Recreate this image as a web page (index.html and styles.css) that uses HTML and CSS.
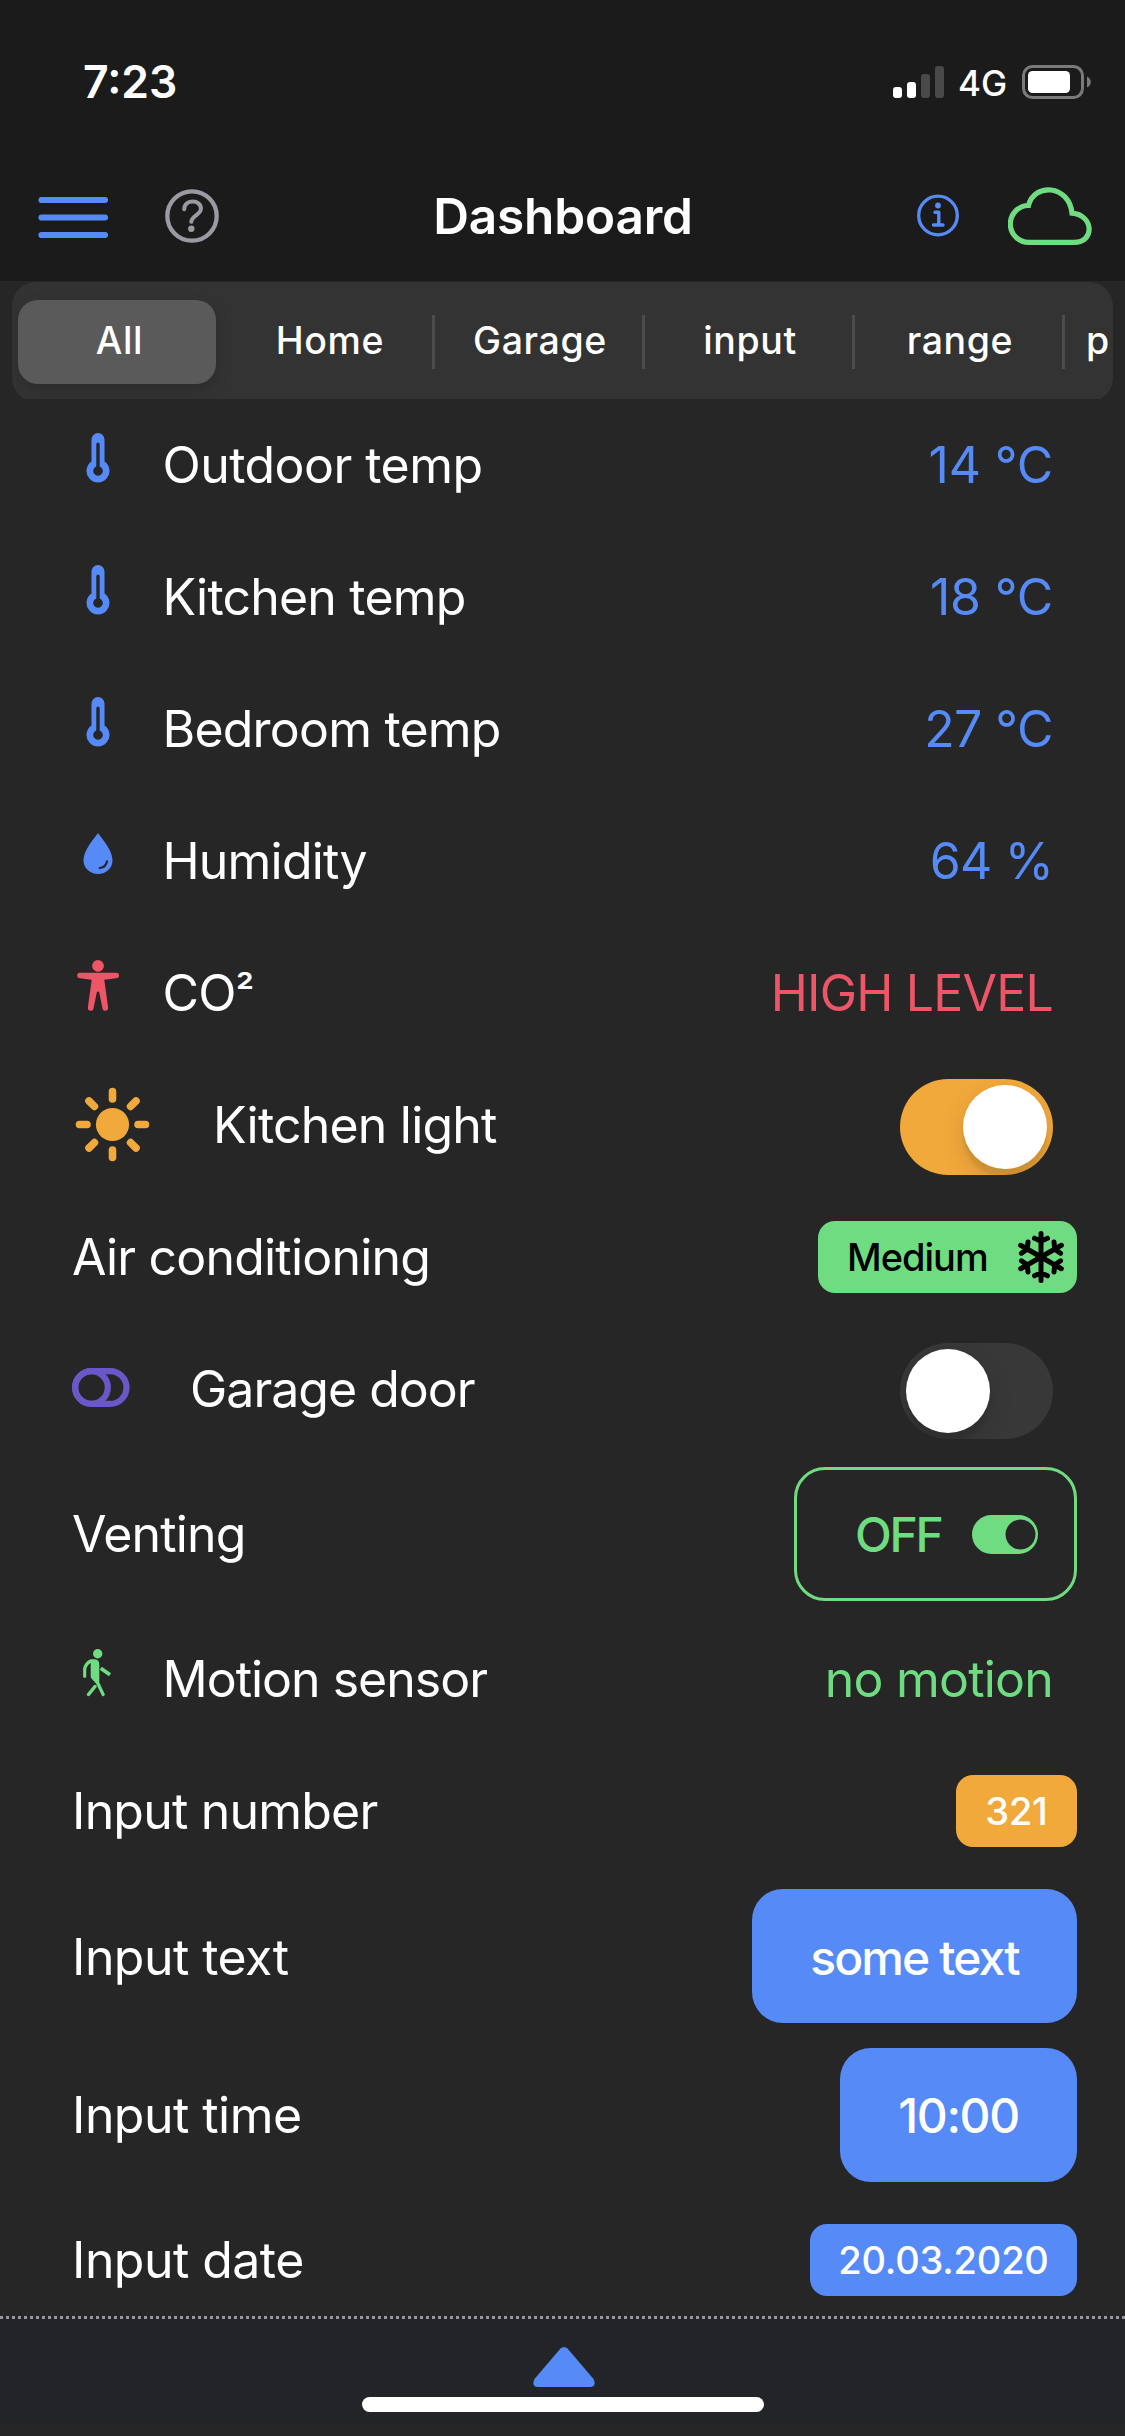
FILE: index.html
```html
<!DOCTYPE html>
<html lang="en">
<head>
<meta charset="utf-8">
<title>Dashboard</title>
<link rel="stylesheet" href="styles.css">
</head>
<body>
<header class="header">
  <div class="status">
    <span class="clock">7:23</span>
    <div class="status-right">
      <svg class="signal" width="51" height="32" viewBox="0 0 51 32"><rect x="0" y="21" width="9" height="11" rx="3" fill="#fff"/><rect x="14" y="16" width="9" height="16" rx="3" fill="#fff"/><rect x="28" y="8" width="9" height="24" rx="3" fill="#494949"/><rect x="42" y="0" width="9" height="32" rx="3" fill="#494949"/></svg>
      <span class="net">4G</span>
      <svg class="battery" width="70" height="34" viewBox="0 0 70 34"><rect x="1.5" y="1.5" width="59" height="31" rx="9" fill="none" stroke="#7a7a7a" stroke-width="3"/><rect x="6" y="6" width="42" height="22" rx="4.5" fill="#fff"/><path d="M65 11.500c5 2 5 9 0 11z" fill="#7a7a7a"/></svg>
    </div>
  </div>
  <nav class="navbar">
    <div class="nav-side">
      <svg width="70" height="42" viewBox="0 0 70 42" stroke="#568bf7" stroke-width="6.200" stroke-linecap="round"><path d="M3.500 3H67M3.500 20.500H67M3.500 38H67"/></svg>
      <svg class="help" width="54" height="54" viewBox="0 0 54 54" fill="none" stroke="#9a9aa2" stroke-linecap="round"><circle cx="27" cy="27" r="24.700" stroke-width="4.300"/><path d="M19.200 20.200c.3-10.400 17-10 16.700-.4-.2 6.200-9.300 6.800-9.600 13" stroke-width="4"/><circle cx="26.300" cy="39.800" r="3.200" fill="#9a9aa2" stroke="none"/></svg>
    </div>
    <h1 class="title">Dashboard</h1>
    <div class="nav-side nav-right">
      <svg class="info" width="42" height="43" viewBox="0 0 42 43" fill="none" stroke="#568bf7" stroke-linecap="round" stroke-linejoin="round"><circle cx="21" cy="21.500" r="19.300" stroke-width="3.300"/><path d="M18 18.300h3.800v12.500M16.500 31h9.500" stroke-width="3.400"/><circle cx="21" cy="11.500" r="2.900" fill="#568bf7" stroke="none"/></svg>
      <svg width="84" height="58" viewBox="0 0 84 58" fill="none" stroke="#6fdc82" stroke-width="5.200" stroke-linejoin="miter"><path d="M21 55.400A18.200 18.200 0 0 1 20.500 18.500C26-4.500 61-2.500 64 26.200C86 28 87 55.400 66 55.400Z"/></svg>
    </div>
  </nav>
</header>
<div class="tabs-clip">
  <div class="tabs">
    <div class="tab"><span class="pill">All</span></div>
    <div class="tab">Home</div>
    <div class="tab ruled">Garage</div>
    <div class="tab ruled">input</div>
    <div class="tab ruled">range</div>
    <div class="tab ruled last">p</div>
  </div>
</div>
<main class="list">
  <div class="row blue"><svg class="ico"><use href="#thermo"/></svg><span class="label loose">Outdoor temp</span><span class="value wide">14 °C</span></div>
  <div class="row blue"><svg class="ico"><use href="#thermo"/></svg><span class="label">Kitchen temp</span><span class="value wide">18 °C</span></div>
  <div class="row blue"><svg class="ico"><use href="#thermo"/></svg><span class="label">Bedroom temp</span><span class="value loose">27 °C</span></div>
  <div class="row blue"><svg class="ico" viewBox="0 0 50 60"><path d="M25 13C29 19 39.500 30 39.500 40.500a14.500 13.500 0 0 1-29 0C10.500 30 21 19 25 13Z" fill="#568bf7"/><path d="M33.900 41.300c-.4 4-2.800 6-7.200 6.700" fill="none" stroke="#262626" stroke-width="2.200" stroke-linecap="round"/></svg><span class="label">Humidity</span><span class="value">64 %</span></div>
  <div class="row red"><svg class="ico" viewBox="0 0 50 60"><g fill="#ec5666"><circle cx="25" cy="13.900" r="5.900"/><path d="M7 20.700H43.200a2.800 2.800 0 0 1 0 5.600L31.300 27.700 35.200 56a2.900 2.900 0 0 1-5.600 1L26.300 40.700q-1.300-2.400-2.600 0L20.400 57a2.900 2.900 0 0 1-5.600-1L18.700 27.700 7 26.300a2.800 2.800 0 0 1 0-5.600Z"/></g></svg><span class="label">CO<span class="sup">²</span></span><span class="value">HIGH LEVEL</span></div>
  <div class="row"><svg class="ico-sun" width="75" height="75" viewBox="-37.500 -37.500 75 75"><circle r="16.600" fill="#f2a93b"/><path d="M0-25.500V-33M0 25.500V33M25.500 0H33M-25.500 0H-33M18.100-18.100L23.500-23.500M18.100 18.100L23.500 23.500M-18.100-18.100L-23.500-23.500M-18.100 18.100L-23.500 23.500" stroke="#f2a93b" stroke-width="7.600" stroke-linecap="round"/></svg><span class="label">Kitchen light</span><span class="switch on"><i class="knob"></i></span></div>
  <div class="row"><span class="label">Air conditioning</span><span class="btn small green">Medium<svg class="snow" width="48" height="52" viewBox="-24 -26 48 52" fill="none" stroke="#000" stroke-width="5" stroke-linecap="round" stroke-linejoin="round"><g id="arm"><path d="M0 0V-23.500M-6.500-18.800L0-15.800L6.500-18.800"/></g><use href="#arm" transform="rotate(60)"/><use href="#arm" transform="rotate(120)"/><use href="#arm" transform="rotate(180)"/><use href="#arm" transform="rotate(240)"/><use href="#arm" transform="rotate(300)"/></svg></span></div>
  <div class="row"><svg class="ico-toggle" width="58" height="39" viewBox="0 0 58 39" fill="none" stroke="#6a58c9" stroke-width="6.200"><rect x="3.100" y="3.100" width="51.400" height="32.800" rx="16.400"/><circle cx="19.500" cy="19.500" r="16.300"/></svg><span class="label tight">Garage door</span><span class="switch"><i class="knob"></i></span></div>
  <div class="row tall"><span class="label">Venting</span><span class="btn outline">OFF<svg class="mini" width="66" height="39" viewBox="0 0 66 39"><path fill-rule="evenodd" fill="#6fdc82" d="M19.500 0h27a19.500 19.500 0 0 1 0 39h-27a19.500 19.500 0 0 1 0-39ZM48.500 4.500a15 15 0 1 0 .01 0Z"/></svg></span></div>
  <div class="row lime"><svg class="ico" viewBox="0 0 50 60"><circle cx="24.700" cy="15.700" r="4.700" fill="#6fdc82"/><path d="M16.500 22.500C19 20.500 26.300 20.300 26.300 26V44.500L31.600 55.800a1.600 1.600 0 0 1-2.900 1.400L23 45.500L18.500 40.500Q17.700 39.500 17.700 38V25Z" fill="#6fdc82"/><g fill="none" stroke="#6fdc82" stroke-linejoin="round"><path d="M17.700 23Q13 25.500 11.700 30.500V38.300" stroke-width="3.200" stroke-linecap="round"/><path d="M27.700 30.300l9.300 6.400" stroke-width="3.800"/><path d="M22 48.500l-6.500 8" stroke-width="3.500" stroke-linecap="round"/></g></svg><span class="label tight">Motion sensor</span><span class="value">no motion</span></div>
  <div class="row"><span class="label">Input number</span><span class="btn small orange">321</span></div>
  <div class="row tall big"><span class="label loose">Input text</span><span class="btn large">some text</span></div>
  <div class="row tall big"><span class="label loose">Input time</span><span class="btn large time">10:00</span></div>
  <div class="row"><span class="label loose">Input date</span><span class="btn small date">20.03.2020</span></div>
</main>
<footer class="footer">
  <svg class="arrow" width="62" height="40" viewBox="0 0 62 40"><path d="M27.500 1.500Q31-1.500 34.500 1.500L60.500 32Q64 39.500 57 40H5Q-2 39.500 1.500 32Z" fill="#568bf7"/></svg>
  <div class="home-bar"></div>
</footer>
<svg width="0" height="0" class="defs"><symbol id="thermo" viewBox="0 0 50 60"><path fill-rule="evenodd" fill="#568bf7" d="M18.500 15.500a6.500 6.500 0 0 1 13 0V37.500a11.500 11.500 0 1 1-13 0ZM23.300 20.300V42.500a4.800 4.800 0 1 0 3.400 0V20.300a1.700 1.700 0 0 0-3.400 0Z"/></symbol></svg>
</body>
</html>
```
FILE: styles.css
```css
* { box-sizing: border-box; }
body {
  margin: 0;
  width: 1125px;
  height: 2436px;
  overflow: hidden;
  display: flex;
  flex-direction: column;
  background: #262626;
  color: #fff;
  font-family: Inter, "Liberation Sans", sans-serif;
}
svg { display: block; flex: none; }
.defs { display: none; }

.header { height: 281px; background: #1b1b1b; }
.status {
  height: 150px;
  padding: 15px 33px 0 83px;
  display: flex;
  justify-content: space-between;
  align-items: center;
}
.clock { font-size: 44.500px; font-weight: 600; line-height: 54px; margin-top: -1px; }
.status-right { display: flex; align-items: center; margin-top: -1px; }
.net { font-size: 35px; font-weight: 500; width: 78px; padding-left: 14px; line-height: 42px; margin-top: 2px; }
.navbar {
  height: 131px;
  padding: 0 33px 0 38px;
  display: grid;
  grid-template-columns: 1fr auto 1fr;
  align-items: center;
}
.nav-side { display: flex; align-items: center; height: 131px; padding-top: 4px; }
.help { margin: -4px 0 0 57px; }
.nav-right { justify-content: flex-end; padding-top: 1px; }
.info { margin: -2px 49px 0 0; }
.title { margin: 0; padding-right: 4px; font-size: 49.500px; line-height: 60px; font-weight: 600; letter-spacing: -.15px; }

.tabs-clip { height: 118px; padding: 1px 12px 0; overflow: hidden; }
.tabs {
  height: 120px;
  padding-left: 3px;
  display: flex;
  align-items: center;
  overflow: hidden;
  background: #333;
  border-radius: 24px;
  font-size: 37.500px;
  font-weight: 500;
  letter-spacing: .6px;
}
.tab {
  width: 210px;
  height: 54px;
  padding-bottom: 3px;
  flex: none;
  display: flex;
  align-items: center;
  justify-content: center;
}
.ruled { box-shadow: -3px 0 0 #4c4c4c; }
.last { justify-content: flex-start; padding-left: 21px; }
.pill {
  width: 198px;
  height: 84px;
  margin: 3px 0 0 -6px;
  padding: 0 0 3px 5px;
  flex: none;
  display: flex;
  align-items: center;
  justify-content: center;
  background: #5a5a5a;
  border-radius: 20px;
  box-shadow: 0 6px 16px rgba(0, 0, 0, .15);
}

.list { flex: none; height: 1917px; padding: 0 48px 0 72px; }
.row { height: 132px; display: flex; align-items: center; font-size: 50px; letter-spacing: -.8px; }
.row.tall { height: 158px; }
.row.big { height: 158.5px; }
.big .label { padding-top: 1px; }
.label { flex: 1; white-space: nowrap; }
.loose { letter-spacing: -.55px; }
.wide { letter-spacing: -.2px; }
.tight { letter-spacing: -1px; }
.sup { font-size: 41px; font-weight: 500; line-height: 0; vertical-align: 4px; }
.value { padding-right: 24px; white-space: nowrap; }
.blue .value { color: #568bf7; }
.red .value { color: #ec5666; }
.lime .value { color: #6fdc82; }
.ico { width: 50px; height: 60px; margin: -22px 40px 0 .5px; }
.ico-sun { margin: -2px 63px 0 3px; }
.ico-toggle { margin: -3px 60px 0 0; }

.switch {
  width: 153px;
  height: 96px;
  margin: 4px 24px 0 0;
  padding: 6px;
  display: flex;
  border-radius: 48px;
  background: #383838;
  overflow: hidden;
}
.switch.on { background: #f2a93b; justify-content: flex-end; }
.knob {
  width: 84px;
  height: 84px;
  border-radius: 50%;
  background: #fff;
  box-shadow: 0 9px 24px rgba(0, 0, 0, .15), 0 9px 3px rgba(0, 0, 0, .06);
}

.btn { display: flex; align-items: center; justify-content: center; white-space: nowrap; font-weight: 500; }
.small { height: 72px; border-radius: 17px; font-size: 38px; letter-spacing: -.2px; background: #568bf7; }
.large { width: 325px; height: 134px; padding-top: 2px; border-radius: 31px; font-size: 48px; letter-spacing: -1.900px; background: #568bf7; }
.large.time { width: 237px; letter-spacing: -1.400px; }
.small.orange { width: 121px; background: #f2a93b; }
.small.date { width: 267px; }
.small.green { width: 259px; justify-content: space-between; padding: 0 12px 0 29px; letter-spacing: -1px; background: #6fdc82; color: #000; }
.outline {
  width: 283px;
  height: 134px;
  padding: 0 36px 0 58px;
  justify-content: space-between;
  border: 3px solid #6fdc82;
  border-radius: 31px;
  color: #6fdc82;
  font-size: 48px;
  letter-spacing: -2.300px;
}

.footer {
  flex: 1;
  display: flex;
  flex-direction: column;
  align-items: center;
  background:
    linear-gradient(90deg, #97979f 50%, #262626 50%) 0 0 / 6px 3px repeat-x,
    linear-gradient(#232428, #232428) 0 0 / 100% 107px no-repeat;
}
.arrow { margin: 31px 0 10px 3px; }
.home-bar { width: 402px; height: 15px; border-radius: 8px; background: #fff; }
```
